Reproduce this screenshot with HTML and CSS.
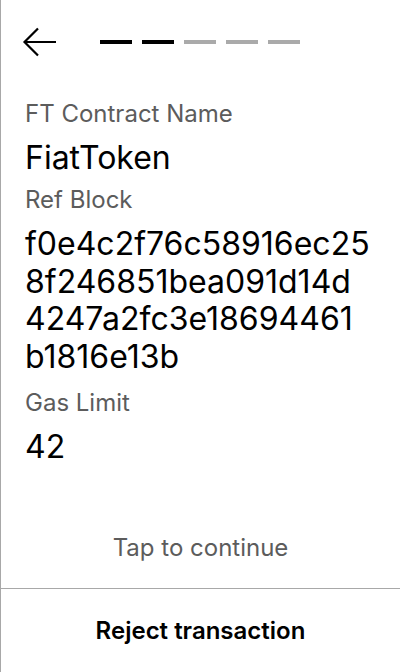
FILE: index.html
```html
<!DOCTYPE html>
<html>
<head>
<meta charset="utf-8">
<link rel="stylesheet" href="styles.css">
</head>
<body>
<div class="screen">
  <div class="header">
    <svg class="back" width="36" height="32" viewBox="0 0 36 32">
      <path d="M2 15 H34 M16 1.5 L2.5 15 L16 28.5" fill="none" stroke="#000" stroke-width="2.2"/>
    </svg>
    <div class="steps">
      <span class="step on"></span>
      <span class="step on"></span>
      <span class="step"></span>
      <span class="step"></span>
      <span class="step"></span>
    </div>
  </div>
  <div class="content">
    <div class="label">FT Contract Name</div>
    <div class="value">FiatToken</div>
    <div class="label">Ref Block</div>
    <div class="value hash">f0e4c2f76c58916ec25<br>8f246851bea091d14d<br>4247a2fc3e18694461<br>b1816e13b</div>
    <div class="label">Gas Limit</div>
    <div class="value">42</div>
  </div>
  <div class="tap">Tap to continue</div>
  <div class="footer">Reject transaction</div>
</div>
</body>
</html>
```

FILE: styles.css
```css
html, body {
  margin: 0;
  padding: 0;
  background: #fff;
}
.screen {
  width: 399px;
  height: 672px;
  border-left: 1px solid #a8a8a8;
  display: flex;
  flex-direction: column;
  font-family: Inter, "Noto Sans", sans-serif;
  color: #000;
}
.header {
  display: flex;
  align-items: center;
  padding: 27px 0 0 21px;
  height: 32px;
}
.back {
  display: block;
}
.steps {
  display: flex;
  gap: 10px;
  margin-left: 42px;
  margin-top: -2px;
}
.step {
  width: 32px;
  height: 4px;
  background: #aaaaaa;
}
.step.on {
  background: #000;
}
.content {
  padding: 41px 16px 0 24px;
}
.label {
  font-size: 24px;
  line-height: 28px;
  color: #5c5c5c;
}
.value {
  font-size: 32px;
  line-height: 37px;
  margin: 11px 0 10px;
}
.value.hash {
  line-height: 37.5px;
  margin-bottom: 14px;
}
.tap {
  margin-top: auto;
  text-align: center;
  font-size: 24px;
  line-height: 28px;
  color: #5c5c5c;
  padding-bottom: 26px;
}
.footer {
  border-top: 1px solid #a8a8a8;
  height: 83px;
  display: flex;
  align-items: center;
  justify-content: center;
  font-size: 24px;
  font-weight: 600;
}
```
